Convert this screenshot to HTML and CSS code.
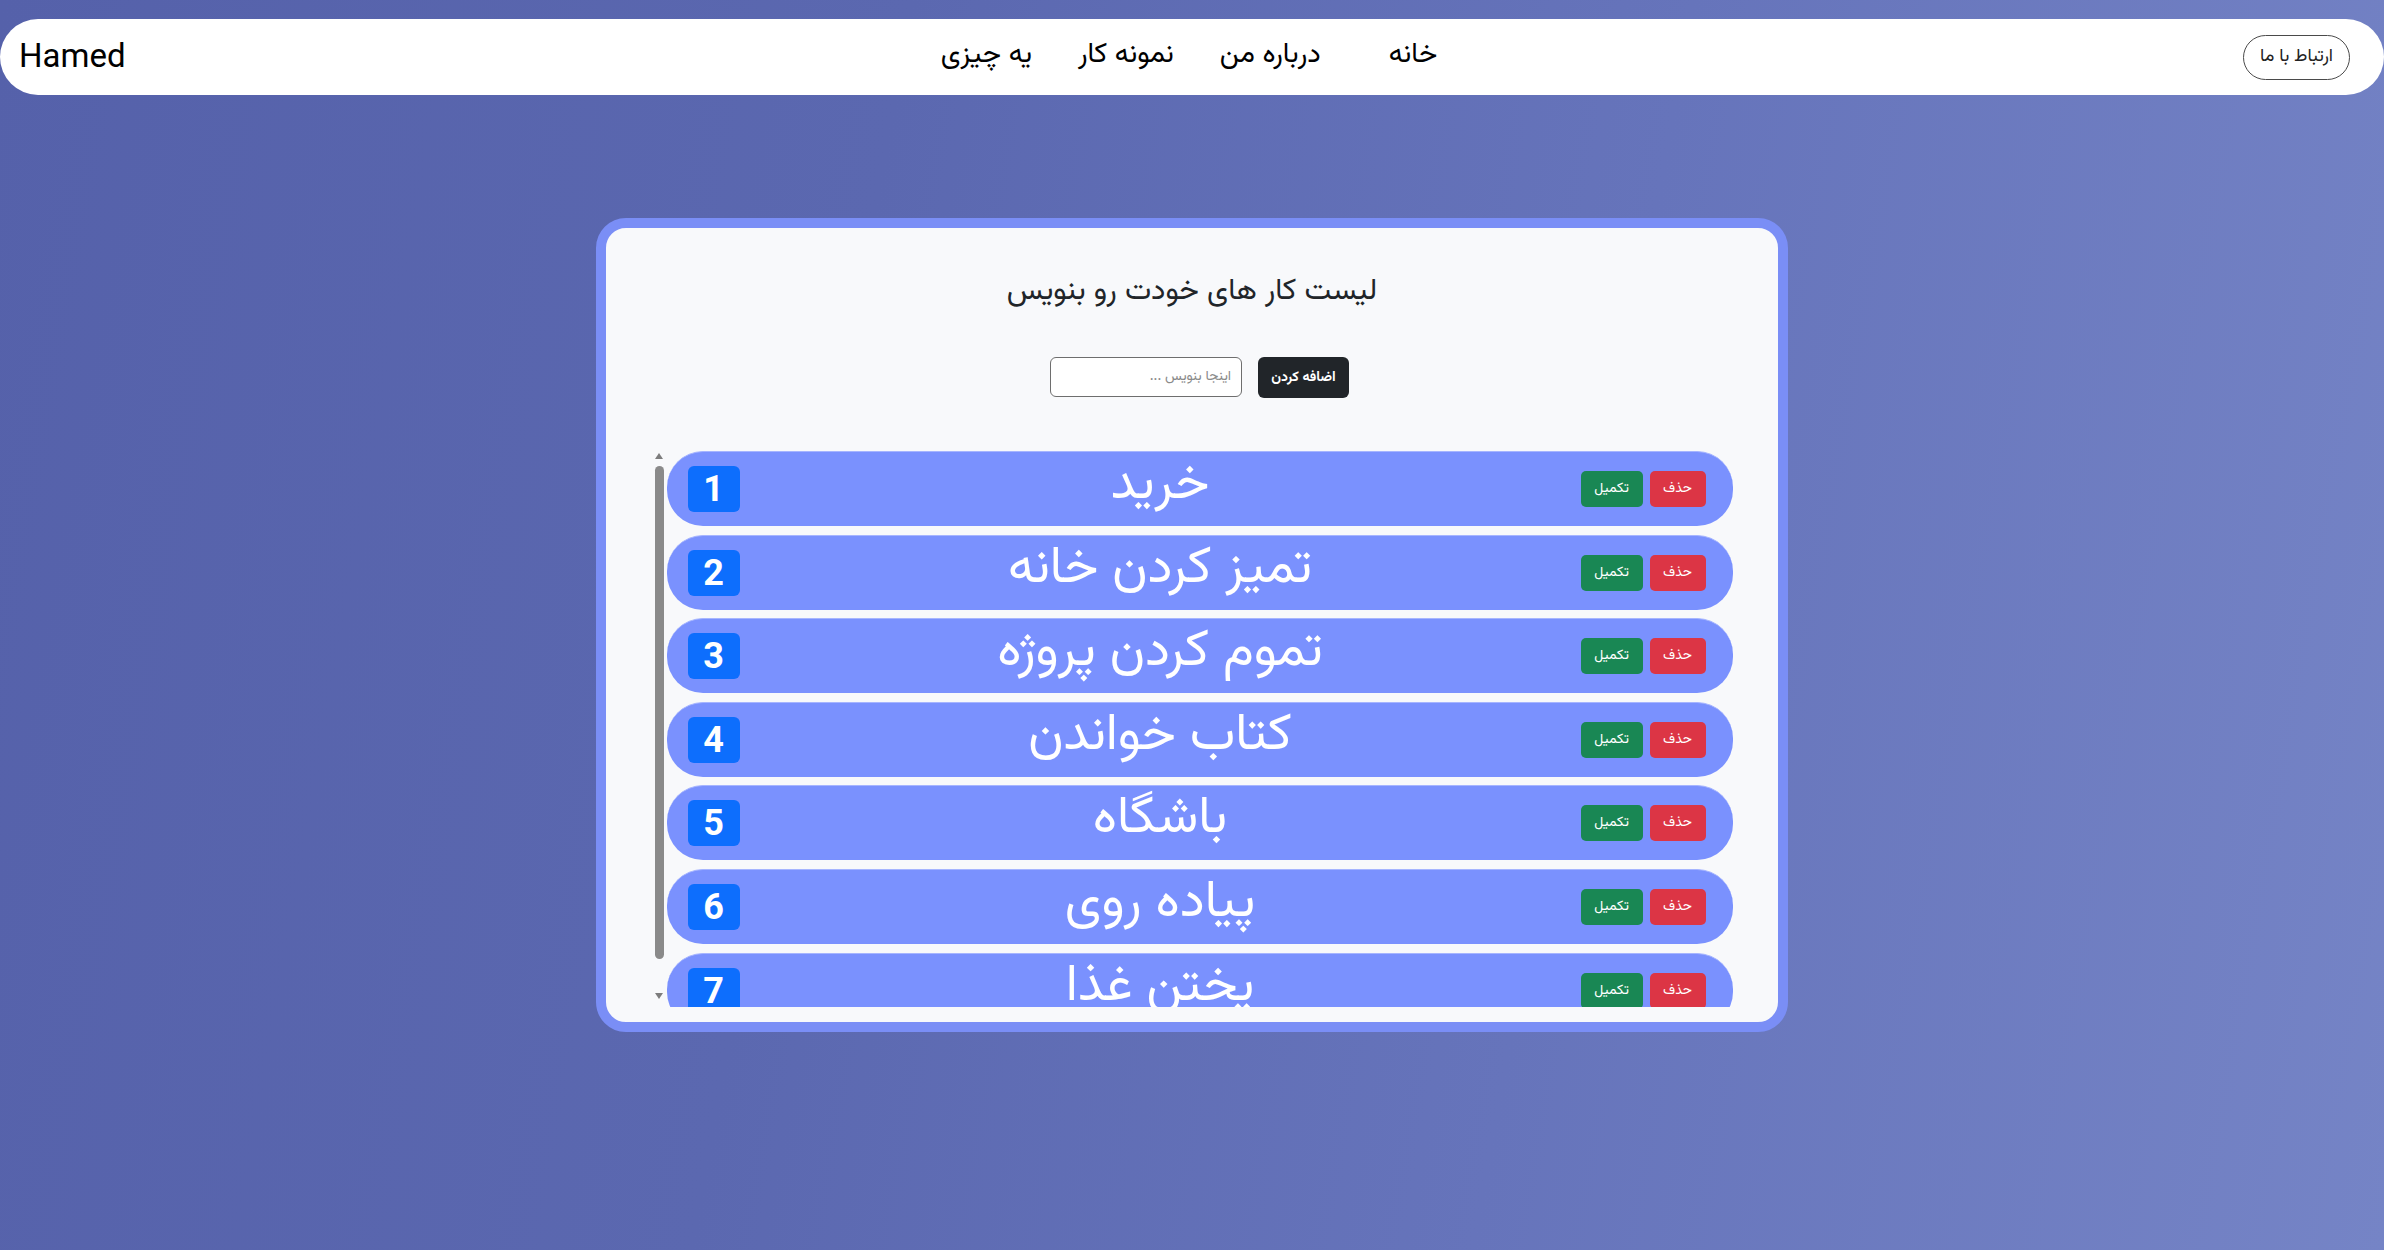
FILE: index.html
```html
<!DOCTYPE html>
<html lang="fa">
<head>
<meta charset="utf-8">
<title>Hamed - Todo</title>
<link rel="stylesheet" href="styles.css">
</head>
<body>
<nav class="navbar">
  <a class="brand" href="#">Hamed</a>
  <ul class="nav-links">
    <li class="nav-item home"><a href="#">خانه</a></li>
    <li class="nav-item"><a href="#">درباره من</a></li>
    <li class="nav-item"><a href="#">نمونه کار</a></li>
    <li class="nav-item"><a href="#">یه چیزی</a></li>
  </ul>
  <div class="nav-end">
    <button class="contact-btn" type="button">ارتباط با ما</button>
  </div>
</nav>

<main class="page">
  <section class="todo-card">
    <h1 class="todo-title">لیست کار های خودت رو بنویس</h1>
    <form class="add-form">
      <input class="add-input" type="text" placeholder="اینجا بنویس ..." dir="rtl">
      <button class="add-btn" type="button">اضافه کردن</button>
    </form>
    <div class="list-wrap">
      <div class="scrollbar" aria-hidden="true">
        <div class="sb-btn sb-up"><span class="arrow-up"></span></div>
        <div class="sb-track"><div class="sb-thumb"></div></div>
        <div class="sb-btn sb-down"><span class="arrow-down"></span></div>
      </div>
      <ul class="todo-list">
        <li class="todo-item">
          <div class="actions"><button class="btn-del" type="button">حذف</button><button class="btn-done" type="button">تکمیل</button></div>
          <span class="todo-text">خرید</span>
          <span class="badge">1</span>
        </li>
        <li class="todo-item">
          <div class="actions"><button class="btn-del" type="button">حذف</button><button class="btn-done" type="button">تکمیل</button></div>
          <span class="todo-text">تمیز کردن خانه</span>
          <span class="badge">2</span>
        </li>
        <li class="todo-item">
          <div class="actions"><button class="btn-del" type="button">حذف</button><button class="btn-done" type="button">تکمیل</button></div>
          <span class="todo-text">تموم کردن پروژه</span>
          <span class="badge">3</span>
        </li>
        <li class="todo-item">
          <div class="actions"><button class="btn-del" type="button">حذف</button><button class="btn-done" type="button">تکمیل</button></div>
          <span class="todo-text">کتاب خواندن</span>
          <span class="badge">4</span>
        </li>
        <li class="todo-item">
          <div class="actions"><button class="btn-del" type="button">حذف</button><button class="btn-done" type="button">تکمیل</button></div>
          <span class="todo-text">باشگاه</span>
          <span class="badge">5</span>
        </li>
        <li class="todo-item">
          <div class="actions"><button class="btn-del" type="button">حذف</button><button class="btn-done" type="button">تکمیل</button></div>
          <span class="todo-text">پیاده روی</span>
          <span class="badge">6</span>
        </li>
        <li class="todo-item">
          <div class="actions"><button class="btn-del" type="button">حذف</button><button class="btn-done" type="button">تکمیل</button></div>
          <span class="todo-text">پختن غذا</span>
          <span class="badge">7</span>
        </li>
      </ul>
    </div>
  </section>
</main>
</body>
</html>
```

FILE: styles.css
```css
* { box-sizing: border-box; }

html, body { height: 100%; }

body {
  margin: 0;
  overflow: hidden;
  font-family: "Vazirmatn", "Noto Sans Arabic", "DejaVu Sans", sans-serif;
  color: #212529;
  background: linear-gradient(100deg, #5561aa 0%, #5b68b0 35%, #6674bb 65%, #7584c6 100%);
}

/* ---------- navbar ---------- */
.navbar {
  margin-top: 19px;
  height: 76px;
  background: #ffffff;
  border-radius: 40px;
  display: grid;
  grid-template-columns: 1fr auto 1fr;
  align-items: center;
  padding: 0 34px 0 19px;
}

.brand {
  font-family: Roboto, "Liberation Sans", sans-serif;
  font-size: 33px;
  color: #000;
  text-decoration: none;
  justify-self: start;
  margin-top: -3px;
}

.nav-links {
  direction: rtl;
  list-style: none;
  margin: -4px 0 0 9px;
  padding: 0;
  display: flex;
  gap: 46px;
  font-size: 28px;
}

.nav-item a { color: #000; text-decoration: none; }
.nav-item.home { margin-left: 22px; }

.nav-end { justify-self: end; }

.contact-btn {
  font-family: inherit;
  font-size: 18px;
  color: #222;
  background: #fff;
  border: 1px solid #4a4a4a;
  border-radius: 23px;
  height: 45px;
  padding: 0 16px;
  direction: rtl;
}

/* ---------- card ---------- */
.page {
  padding-top: 123px;
  display: flex;
  justify-content: center;
}

.todo-card {
  width: 1192px;
  height: 814px;
  background: #f8f9fb;
  border: 10px solid #7a8ef6;
  border-radius: 30px;
  padding: 46px 0 16px;
  display: flex;
  flex-direction: column;
  align-items: center;
}

.todo-title {
  margin: 0;
  font-size: 30px;
  line-height: 36px;
  font-weight: 400;
  direction: rtl;
}

.add-form {
  margin: 47px 0 0;
  padding-left: 15px;
  display: flex;
  gap: 16px;
}

.add-input {
  width: 192px;
  height: 40px;
  border: 1px solid #6e6e6e;
  border-radius: 6px;
  padding: 0 10px;
  font-family: inherit;
  font-size: 14px;
  background: #fff;
}
.add-input::placeholder { color: #8a8a8a; }

.add-btn {
  width: 91px;
  height: 41px;
  background: #212529;
  color: #fff;
  border: none;
  border-radius: 6px;
  font-family: inherit;
  font-size: 14px;
  font-weight: 700;
  direction: rtl;
}

/* ---------- list ---------- */
.list-wrap {
  margin-top: 53px;
  width: 1081px;
  height: 556px;
  display: flex;
}

.scrollbar {
  flex: 0 0 15px;
  display: flex;
  flex-direction: column;
}

.sb-btn {
  flex: 0 0 15px;
  display: flex;
  justify-content: center;
}
.sb-up { align-items: flex-start; padding-top: 2px; }
.sb-down { align-items: flex-start; padding-top: 1px; }

.arrow-up {
  width: 0; height: 0;
  border-left: 4.5px solid transparent;
  border-right: 4.5px solid transparent;
  border-bottom: 6px solid #7d7d7d;
}
.arrow-down {
  width: 0; height: 0;
  border-left: 4.5px solid transparent;
  border-right: 4.5px solid transparent;
  border-top: 6px solid #7d7d7d;
}

.sb-track {
  flex: 1;
  padding: 0 3px;
}
.sb-thumb {
  height: 493px;
  background: #8a8a8a;
  border-radius: 5px;
}

.todo-list {
  direction: rtl;
  list-style: none;
  margin: 0;
  padding: 0;
  flex: 1;
  overflow: hidden;
  display: flex;
  flex-direction: column;
  gap: 8.6px;
}

.todo-item {
  flex: 0 0 75px;
  display: flex;
  align-items: center;
  background: #7a91fe;
  border-top: 1px solid #a6b5ff;
  border-radius: 36px;
  padding: 0 27px 0 21px;
}

.actions { display: flex; gap: 7px; }

.actions button {
  height: 36px;
  border: none;
  border-radius: 5px;
  color: #fff;
  font-family: inherit;
  font-size: 14px;
}
.btn-del { width: 56px; background: #dc3545; }
.btn-done { width: 62px; background: #198754; }

.todo-text {
  flex: 1;
  align-self: stretch;
  text-align: center;
  color: #fff;
  font-size: 52px;
  line-height: 68px;
  padding-bottom: 6px;
}

.badge {
  width: 52px;
  height: 46px;
  background: #0d6efd;
  border-radius: 6px;
  color: #fff;
  font-family: Roboto, "Liberation Sans", sans-serif;
  font-weight: 700;
  font-size: 36px;
  display: flex;
  align-items: center;
  justify-content: center;
}
```
